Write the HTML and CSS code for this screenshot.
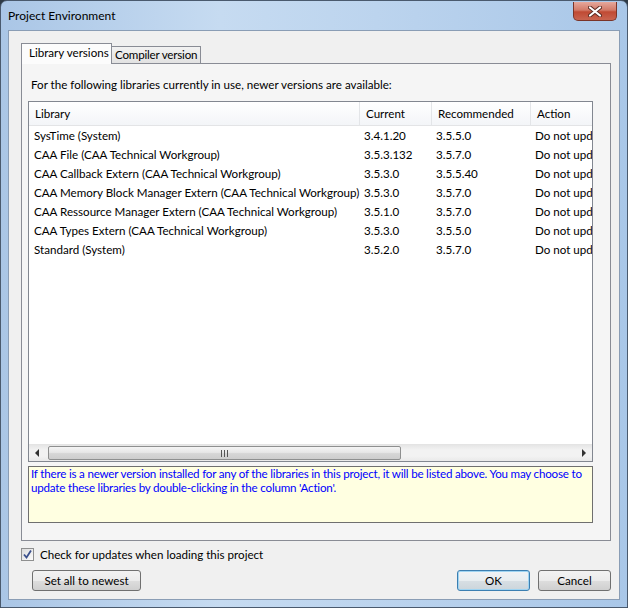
FILE: index.html
```html
<!DOCTYPE html>
<html>
<head>
<meta charset="utf-8">
<link rel="stylesheet" href="styles.css">
</head>
<body>
<div class="window">
  <div class="titlebar">
    <span class="title">Project Environment</span>
    <div class="close">
      <svg width="14" height="11" viewBox="0 0 14 11"><path d="M2 1.5 L12 9.5 M12 1.5 L2 9.5" stroke="#5a2a22" stroke-width="4" stroke-linecap="round"/><path d="M2 1.5 L12 9.5 M12 1.5 L2 9.5" stroke="#ffffff" stroke-width="2.2" stroke-linecap="round"/></svg>
    </div>
  </div>
  <div class="client">
    <div class="tabs">
      <div class="tab active">Library versions</div>
      <div class="tab">Compiler version</div>
    </div>
    <div class="panel">
      <p class="intro">For the following libraries currently in use, newer versions are available:</p>
      <div class="list">
        <div class="grid">
          <div class="hc">Library</div><div class="hc">Current</div><div class="hc">Recommended</div><div class="hc last">Action</div>
          <div class="c first">SysTime (System)</div><div class="c">3.4.1.20</div><div class="c">3.5.5.0</div><div class="c">Do not update</div>
          <div class="c first">CAA File (CAA Technical Workgroup)</div><div class="c">3.5.3.132</div><div class="c">3.5.7.0</div><div class="c">Do not update</div>
          <div class="c first">CAA Callback Extern (CAA Technical Workgroup)</div><div class="c">3.5.3.0</div><div class="c">3.5.5.40</div><div class="c">Do not update</div>
          <div class="c first">CAA Memory Block Manager Extern (CAA Technical Workgroup)</div><div class="c">3.5.3.0</div><div class="c">3.5.7.0</div><div class="c">Do not update</div>
          <div class="c first">CAA Ressource Manager Extern (CAA Technical Workgroup)</div><div class="c">3.5.1.0</div><div class="c">3.5.7.0</div><div class="c">Do not update</div>
          <div class="c first">CAA Types Extern (CAA Technical Workgroup)</div><div class="c">3.5.3.0</div><div class="c">3.5.5.0</div><div class="c">Do not update</div>
          <div class="c first">Standard (System)</div><div class="c">3.5.2.0</div><div class="c">3.5.7.0</div><div class="c">Do not update</div>
        </div>
        <div class="hscroll">
          <div class="arrow"><svg width="5" height="8" viewBox="0 0 5 8"><path d="M4 0 L0 4 L4 8 Z" fill="#333"/></svg></div>
          <div class="track">
            <div class="thumb"><svg width="7" height="7" viewBox="0 0 7 7"><path d="M0.5 0 V7 M3.5 0 V7 M6.5 0 V7" stroke="#555" stroke-width="1"/></svg></div>
          </div>
          <div class="arrow"><svg width="5" height="8" viewBox="0 0 5 8"><path d="M1 0 L5 4 L1 8 Z" fill="#333"/></svg></div>
        </div>
      </div>
      <div class="info">If there is a newer version installed for any of the libraries in this project, it will be listed above. You may choose to update these libraries by double-clicking in the column 'Action'.</div>
    </div>
    <label class="check">
      <span class="box"><svg width="11" height="11" viewBox="0 0 11 11"><path d="M2 5.5 L4.5 8.5 L9 1.5" fill="none" stroke="#3a4f8c" stroke-width="1.8"/></svg></span>
      <span>Check for updates when loading this project</span>
    </label>
    <div class="buttons">
      <div class="btn wide">Set all to newest</div>
      <div class="spacer"></div>
      <div class="btn default">OK</div>
      <div class="btn">Cancel</div>
    </div>
  </div>
</div>
</body>
</html>
```
FILE: styles.css
```css
* { box-sizing: border-box; }
html, body { margin: 0; padding: 0; background: #2e3a46; }
body { font-family: "Lato", "Open Sans", sans-serif; font-size: 11.6px; color: #000; }

.window {
  width: 628px; height: 608px;
  border: 1px solid #4a5a6e;
  border-radius: 7px 7px 0 0;
  background: linear-gradient(to right, #aac6e6 0%, #c6dbf1 35%, #bcd4ee 60%, #a9c7e8 100%);
  display: flex; flex-direction: column;
  padding: 0 7px 7px 7px;
}
.titlebar {
  height: 29px; display: flex; align-items: flex-start;
}
.title { margin-top: 7px; margin-left: 0px; line-height: 16px; color: #000; font-size: 12px; }
.close {
  margin-left: auto; margin-right: 3px; margin-top: 1px;
  width: 44px; height: 19px;
  border: 1px solid #7a3428; border-top: none;
  border-radius: 0 0 5px 5px;
  background: linear-gradient(to bottom, #e6a89c 0%, #d27a68 45%, #c04a33 55%, #c86450 100%);
  display: flex; align-items: center; justify-content: center;
}
.close svg { display: block; }

.client {
  flex: 1;
  background: #f0f0f0;
  border: 1px solid #8a9db5;
  display: flex; flex-direction: column;
}
.tabs { display: flex; align-items: flex-end; margin: 12px 0 0 12px; height: 20px; }
.tab {
  height: 17px; line-height: 16px; white-space: nowrap;
  border: 1px solid #898c95; border-bottom: none;
  background: linear-gradient(to bottom, #f2f2f2, #e2e2e2);
}
.tab.active {
  height: 21px; margin-bottom: -1px; position: relative; z-index: 1;
  background: #fcfcfc;
  padding: 1px 0 0 7px; width: 91px;
}
.tab + .tab { border-left: none; padding: 0 3px 0 3px; letter-spacing: -0.2px; }
.panel {
  margin-left: 12px; width: 590px; height: 478px;
  border: 1px solid #898c95;
  background: #f5f5f5;
  padding: 0 17px 0 6px;
  display: flex; flex-direction: column;
}
.intro { margin: 13px 0 0 3px; line-height: 16px; height: 16px; white-space: nowrap; }
.list {
  margin-top: 8px; height: 361px;
  border: 1px solid #828790; background: #fff;
  display: flex; flex-direction: column; overflow: hidden;
}
.grid {
  flex: 1; display: grid;
  grid-template-columns: 331px 72px 99px 110px;
  grid-template-rows: 24px;
  grid-auto-rows: 19px; align-content: start;
  overflow: hidden; white-space: nowrap;
}
.hc {
  height: 24px; line-height: 24px; padding-left: 6px;
  border-bottom: 1px solid #e3e4e6; border-right: 1px solid #e3e5e8;
  background: linear-gradient(to bottom, #ffffff, #f3f5f8);
}
.hc.last { border-right: none; }
.c { line-height: 19px; padding-left: 4px; overflow: hidden; }
.c.first { padding-left: 5px; }

.hscroll {
  height: 17px; display: flex;
  background: linear-gradient(to bottom, #e6e6e6, #f2f2f2 30%, #f2f2f2 70%, #e9e9e9);
  border-top: 1px solid #e4e4e4;
}
.arrow { width: 17px; display: flex; align-items: center; justify-content: center; }
.track { flex: 1; padding: 1px 0; display: flex; }
.thumb {
  width: 353px; margin-left: 2px;
  border: 1px solid #8e8f8f; border-radius: 2px;
  background: linear-gradient(to bottom, #f4f4f4, #e7e7e7 45%, #d6d6d6 55%, #cdcdcd);
  display: flex; align-items: center; justify-content: center;
}
.thumb svg { display: block; }

.info {
  margin-top: 4px; height: 57px;
  border: 1px solid #6f6f6f; background: #ffffe1;
  color: #0000ff; padding: 0 1px 0 2px; line-height: 14px;
  letter-spacing: -0.2px;
}

.check { display: flex; align-items: center; margin: 7px 0 0 12px; height: 13px; }
.box {
  width: 13px; height: 13px; border: 1px solid #8e8f8f;
  background: linear-gradient(135deg, #dcdcdc, #fbfbfb);
  display: flex; align-items: center; justify-content: center; margin-right: 6px;
}
.box svg { display: block; }

.buttons { display: flex; margin: 9px 8px 0 23px; }
.spacer { flex: 1; }
.btn {
  height: 21px; width: 73px; line-height: 19px; text-align: center;
  border: 1px solid #707070; border-radius: 3px;
  background: linear-gradient(to bottom, #f2f2f2 0%, #ebebeb 50%, #dddddd 51%, #cfcfcf 100%);
}
.btn.wide { width: 109px; }
.btn.default {
  border-color: #3c7fb1; margin-right: 8px;
  box-shadow: inset 0 0 0 1px #9fd4f2;
  background: linear-gradient(to bottom, #f0f3f5 0%, #e8edf0 50%, #d8dfe4 51%, #ccd5db 100%);
}
```
